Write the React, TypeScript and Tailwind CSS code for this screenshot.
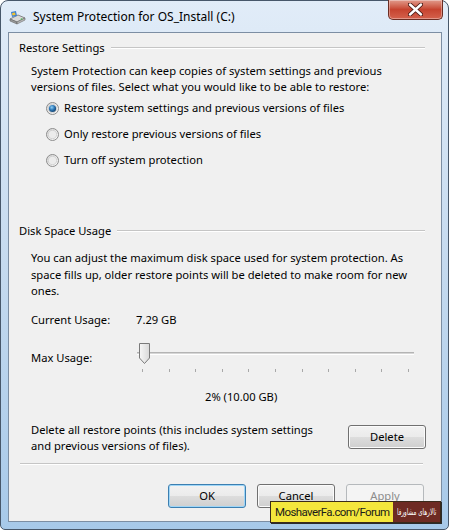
import React from "react";

function TitleIcon() {
  return (
    <svg width="19" height="16" viewBox="0 0 19 16">
      <path d="M2 9 L10 5 L17 8 L9 12 Z" fill="#d9d9d9" stroke="#6f6f6f" strokeWidth="0.8" />
      <path d="M2 9 L9 12 L9 14 L2 11 Z" fill="#9a9a9a" stroke="#666" strokeWidth="0.6" />
      <path d="M9 12 L17 8 L17 10 L9 14 Z" fill="#bdbdbd" stroke="#666" strokeWidth="0.6" />
      <path d="M3 2 L8 1 L9 6 L4 7 Z" fill="#3d7fd1" />
      <path d="M4 3 L7 2.5 L7.5 5 L4.5 5.6 Z" fill="#f1c232" />
      <circle cx="13.5" cy="9" r="0.8" fill="#3fbf4f" />
    </svg>
  );
}

function CloseButton() {
  return (
    <div className="w-[55px] h-[20px] rounded-b-[5px] border border-t-0 border-[#6b2d23] bg-gradient-to-b from-[#e09a8b] via-[#c6432f] to-[#d4614c] flex items-center justify-center shadow-[inset_0_0_0_1px_rgba(255,255,255,0.35)]">
      <svg width="15" height="13" viewBox="0 0 15 13">
        <path d="M2 1.5 L13 11.5 M13 1.5 L2 11.5" stroke="#4a1a14" strokeWidth="4.2" strokeLinecap="round" />
        <path d="M2 1.5 L13 11.5 M13 1.5 L2 11.5" stroke="#ffffff" strokeWidth="2.4" strokeLinecap="round" />
      </svg>
    </div>
  );
}

function Radio({ checked, id }: { checked?: boolean; id: string }) {
  return (
    <svg width="13" height="13" viewBox="0 0 13 13" className="shrink-0">
      <defs>
        <linearGradient id={`rg-${id}`} x1="0" y1="0" x2="1" y2="1">
          <stop offset="0" stopColor="#d4d4d4" />
          <stop offset="1" stopColor="#ffffff" />
        </linearGradient>
        <radialGradient id={`rd-${id}`} cx="0.4" cy="0.35" r="0.7">
          <stop offset="0" stopColor="#8fd0f5" />
          <stop offset="0.5" stopColor="#2f79b8" />
          <stop offset="1" stopColor="#0f3c66" />
        </radialGradient>
      </defs>
      <circle cx="6.5" cy="6.5" r="6" fill={`url(#rg-${id})`} stroke="#8c8c8c" strokeWidth="1" />
      <circle cx="6.5" cy="6.5" r="4.2" fill="#ececec" stroke="#c2c2c2" strokeWidth="0.6" />
      {checked && <circle cx="6.5" cy="6.5" r="3.6" fill={`url(#rd-${id})`} />}
    </svg>
  );
}

function GroupHeader({ label }: { label: string }) {
  return (
    <div className="flex items-center pl-[10px] pr-[16px] h-[16px]">
      <span className="pr-[6px]">{label}</span>
      <div className="flex-1 flex flex-col">
        <div className="h-px bg-[#c5c5c5]" />
        <div className="h-px bg-white" />
      </div>
    </div>
  );
}

function Button({ label, kind }: { label: string; kind?: "default" | "disabled" }) {
  if (kind === "disabled") {
    return (
      <div className="w-[78px] h-[24px] rounded-[3px] border border-[#b5b9bc] bg-[#f4f4f4] text-[#8c8c8c] flex items-center justify-center">
        {label}
      </div>
    );
  }
  const border = kind === "default" ? "border-[#3c7fb1] shadow-[inset_0_0_0_1px_#9fd6f7]" : "border-[#707070] shadow-[inset_0_0_0_1px_#fbfbfb]";
  return (
    <div
      className={`w-[78px] h-[24px] rounded-[3px] border ${border} bg-[linear-gradient(#f2f2f2_0%,#ebebeb_50%,#dddddd_51%,#cfcfcf_100%)] flex items-center justify-center`}
    >
      {label}
    </div>
  );
}

export default function App() {
  const ticks = Array.from({ length: 11 }, (_, i) => i);

  return (
    <div className="w-[450px] h-[531px] bg-white font-['Noto_Sans',sans-serif] text-[11.2px] text-black leading-[16px]">
      <div className="relative w-[449px] h-[530px] rounded-t-[8px] rounded-b-[5px] border border-[#47576a] bg-gradient-to-b from-[#e1ecf8] via-[#c5daef] to-[#a7c9e9] flex flex-col">
        {/* title bar */}
        <div className="h-[31px] flex items-start">
          <div className="pl-[7px] pt-[9px]">
            <TitleIcon />
          </div>
          <div className="pl-[6px] pt-[8px] text-[12px] text-black">System Protection for OS_Install (C:)</div>
          <div className="ml-auto mr-[5px] -mt-px">
            <CloseButton />
          </div>
        </div>

        {/* client */}
        <div className="ml-[7px] w-[434px] h-[490px] border border-[#7c8ea3] bg-[#f0f0f0] flex flex-col">
          <div className="mt-[7px]">
            <GroupHeader label="Restore Settings" />
          </div>

          <div className="mt-[7px] pl-[22px] pr-[20px]">
            <p>System Protection can keep copies of system settings and previous</p>
            <p>versions of files. Select what you would like to be able to restore:</p>
          </div>

          <div className="mt-[5px] pl-[37px] flex flex-col gap-[10px]">
            <div className="flex items-center gap-[5px] h-[16px]">
              <Radio id="a" checked />
              <span>Restore system settings and previous versions of files</span>
            </div>
            <div className="flex items-center gap-[5px] h-[16px]">
              <Radio id="b" />
              <span>Only restore previous versions of files</span>
            </div>
            <div className="flex items-center gap-[5px] h-[16px]">
              <Radio id="c" />
              <span>Turn off system protection</span>
            </div>
          </div>

          <div className="mt-[55px]">
            <GroupHeader label="Disk Space Usage" />
          </div>

          <div className="mt-[11px] pl-[22px] pr-[20px] leading-[16.5px]">
            <p>You can adjust the maximum disk space used for system protection. As</p>
            <p>space fills up, older restore points will be deleted to make room for new</p>
            <p>ones.</p>
          </div>

          <div className="mt-[12px] pl-[22px] flex h-[16px]">
            <span className="w-[105px]">Current Usage:</span>
            <span>7.29 GB</span>
          </div>

          <div className="mt-[14px] pl-[22px] flex items-start">
            <span className="w-[106px] pt-[8px]">Max Usage:</span>
            <div className="relative w-[277px] h-[32px]">
              <div className="absolute left-0 right-0 top-[10px] flex flex-col">
                <div className="h-px bg-[#b4b4b4]" />
                <div className="h-px bg-[#d6d6d6]" />
                <div className="h-px bg-white" />
              </div>
              <svg width="13" height="23" viewBox="0 0 13 23" className="absolute left-[1px] top-0">
                <defs>
                  <linearGradient id="thumb" x1="0" y1="0" x2="1" y2="0">
                    <stop offset="0" stopColor="#f7f7f7" />
                    <stop offset="1" stopColor="#d9d9d9" />
                  </linearGradient>
                </defs>
                <path d="M1.5 1.5 H11.5 V16 L6.5 21.5 L1.5 16 Z" fill="url(#thumb)" stroke="#7a7a7a" strokeWidth="1" strokeLinejoin="round" />
              </svg>
              <div className="absolute left-[5px] right-[5px] top-[27px] flex justify-between">
                {ticks.map((t) => (
                  <div key={t} className="w-px h-[3px] bg-[#a8a8a8]" />
                ))}
              </div>
            </div>
          </div>

          <div className="mt-[15px] pl-[196px] h-[16px]">2% (10.00 GB)</div>

          <div className="mt-[17px] pl-[22px] pr-[15px] flex items-start">
            <div className="flex-1">
              <p>Delete all restore points (this includes system settings</p>
              <p>and previous versions of files).</p>
            </div>
            <div className="mt-[3px]">
              <Button label="Delete" />
            </div>
          </div>

          <div className="mt-[9px] mx-[11px] mr-[18px] flex flex-col">
            <div className="h-px bg-[#c5c5c5]" />
            <div className="h-px bg-white" />
          </div>

          <div className="mt-[19px] pl-[159px] flex gap-[11px]">
            <Button label="OK" kind="default" />
            <Button label="Cancel" />
            <Button label="Apply" kind="disabled" />
          </div>
        </div>

        {/* watermark */}
        <div className="absolute left-[269px] top-[500px] flex h-[22px] border border-[#3a2a1a] shadow-[1px_1px_0_#2b2b2b]">
          <div className="w-[122px] bg-[#f4e63c] pl-[4px] flex items-center font-['Roboto',sans-serif] text-[11.5px] tracking-[-0.6px] text-[#1a1a1a] whitespace-nowrap">
            MoshaverFa.com/Forum
          </div>
          <div className="w-[47px] bg-[#6e2b23] flex items-center justify-center text-white text-[9px] whitespace-nowrap font-['DejaVu_Sans',sans-serif]">
            <span dir="rtl" className="inline-block scale-x-[0.62]">تالارهای مشاورفا</span>
          </div>
        </div>
      </div>
    </div>
  );
}
